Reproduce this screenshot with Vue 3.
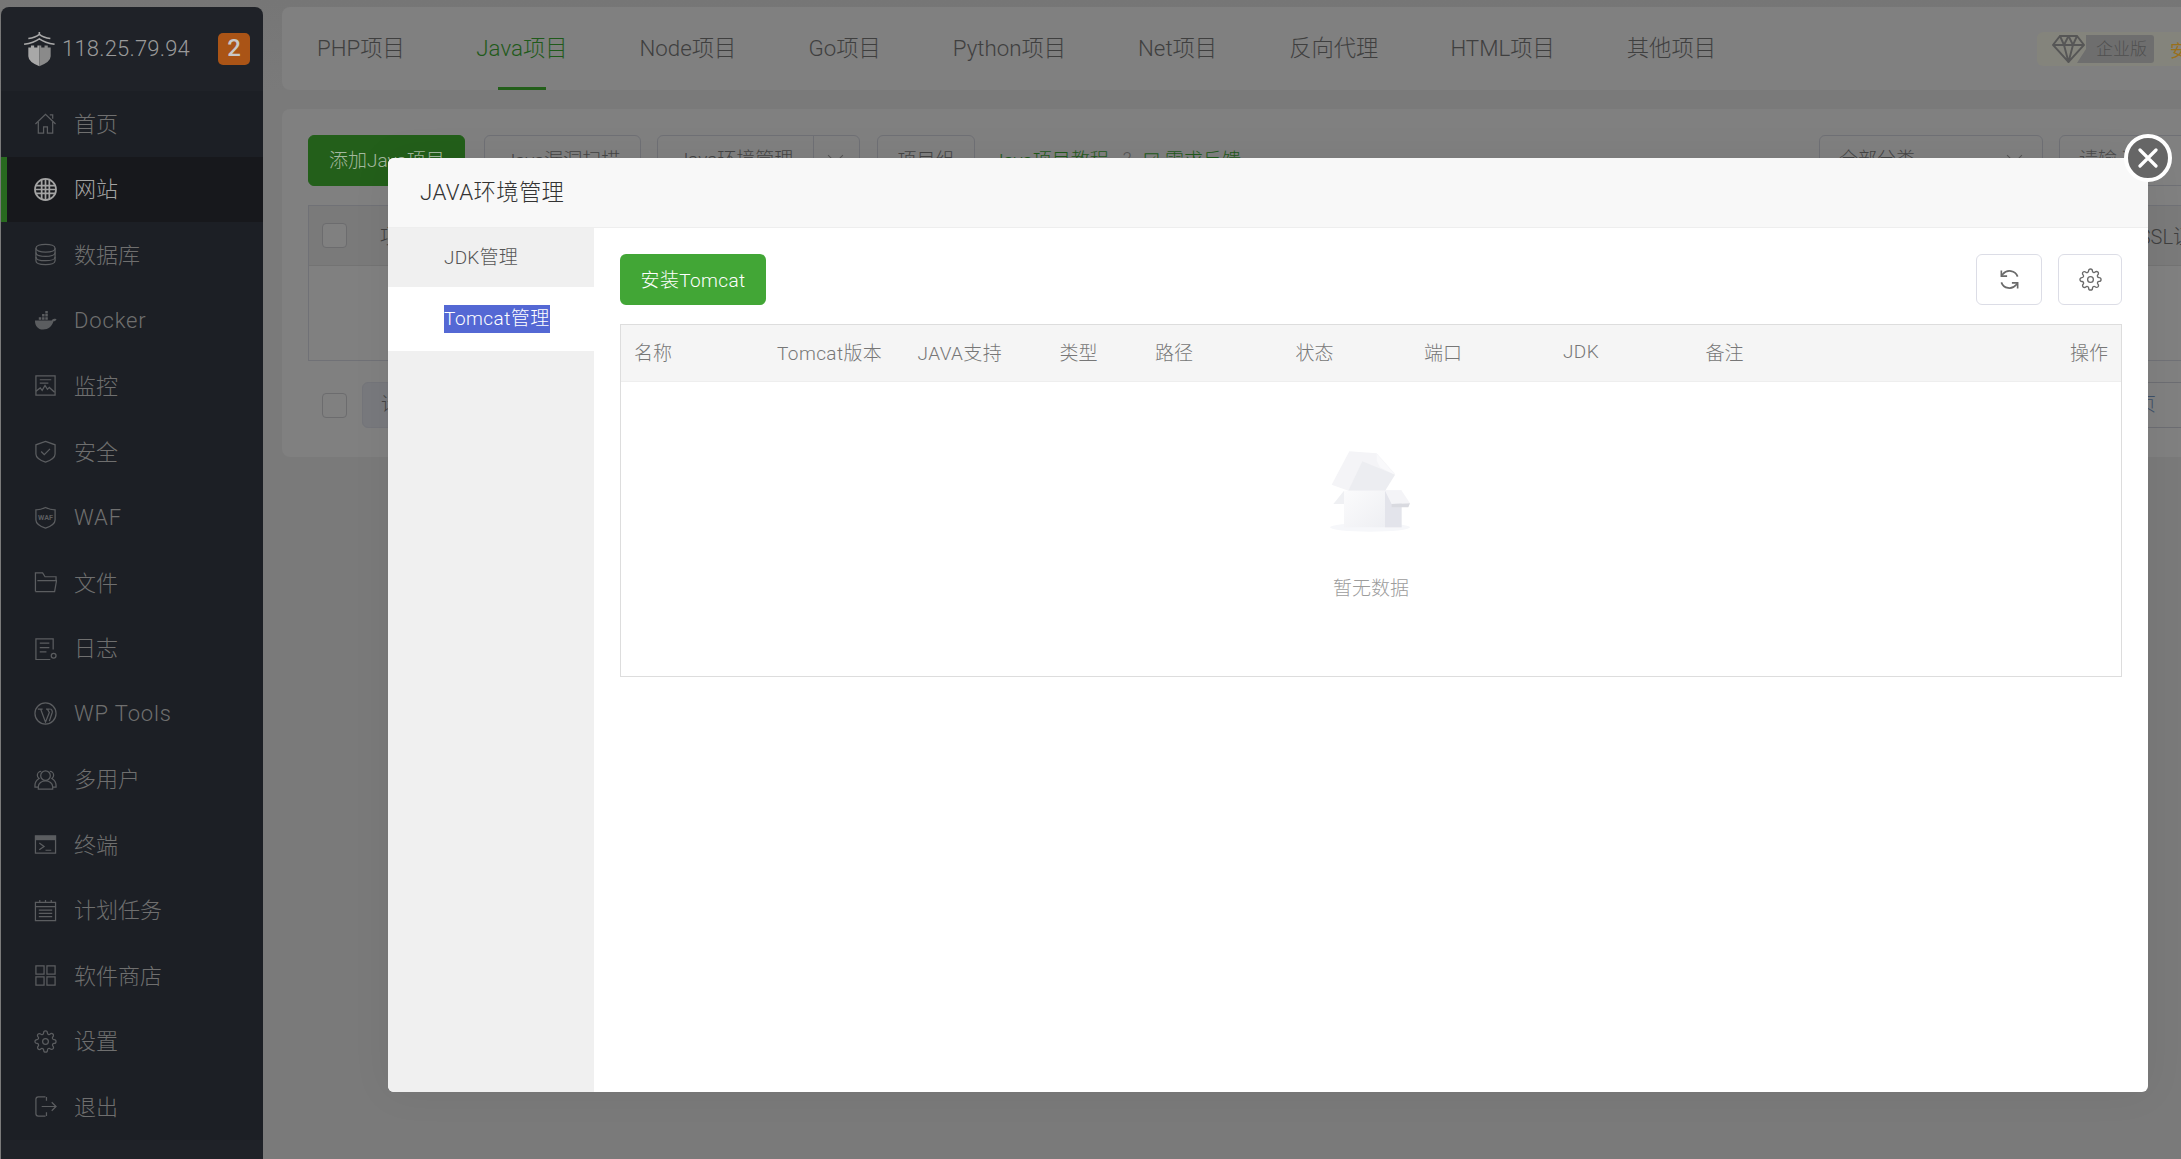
<script setup>
const gearPath = 'M19.4 15a1.65 1.65 0 0 0 .33 1.82l.06.06a2 2 0 0 1 0 2.83 2 2 0 0 1-2.83 0l-.06-.06a1.65 1.65 0 0 0-1.82-.33 1.65 1.65 0 0 0-1 1.51V21a2 2 0 0 1-2 2 2 2 0 0 1-2-2v-.09A1.65 1.65 0 0 0 9 19.4a1.65 1.65 0 0 0-1.82.33l-.06.06a2 2 0 0 1-2.83 0 2 2 0 0 1 0-2.83l.06-.06a1.65 1.65 0 0 0 .33-1.82 1.65 1.65 0 0 0-1.51-1H3a2 2 0 0 1-2-2 2 2 0 0 1 2-2h.09A1.65 1.65 0 0 0 4.6 9a1.65 1.65 0 0 0-.33-1.82l-.06-.06a2 2 0 0 1 0-2.83 2 2 0 0 1 2.83 0l.06.06a1.65 1.65 0 0 0 1.82.33H9a1.65 1.65 0 0 0 1-1.51V3a2 2 0 0 1 2-2 2 2 0 0 1 2 2v.09a1.65 1.65 0 0 0 1 1.51 1.65 1.65 0 0 0 1.82-.33l.06-.06a2 2 0 0 1 2.83 0 2 2 0 0 1 0 2.83l-.06.06a1.65 1.65 0 0 0-.33 1.82V9a1.65 1.65 0 0 0 1.51 1H21a2 2 0 0 1 2 2 2 2 0 0 1-2 2h-.09a1.65 1.65 0 0 0-1.51 1zM15 12a3 3 0 1 1-6 0 3 3 0 0 1 6 0z'

const menu = [
  { label: '首页', paths: ['M1.5 12.5 12 2.5l10.5 10', 'M4.5 10.5V22H10v-6.5h4V22h5.500V10.500', 'M16.500 3h3v4'] },
  { label: '网站', active: true, paths: ['M12 1a11 11 0 1 0 0 22 11 11 0 0 0 0-22z', 'M1.500 8h21M1 12h22M1.500 16h21', 'M8 1.500v21M12 1v22M16 1.500v21'] },
  { label: '数据库', paths: ['M2 5.500C2 3 6.500 1.500 12 1.500S22 3 22 5.500 17.500 9.500 12 9.500 2 8 2 5.500z', 'M2 5.500v13C2 21 6.500 22.500 12 22.500S22 21 22 18.500v-13', 'M2 10c0 2.500 4.500 4 10 4s10-1.500 10-4', 'M2 14.500c0 2.500 4.500 4 10 4s10-1.500 10-4'] },
  { label: 'Docker', latin: true, fills: ['M1 12h17.500c.8-1.500 2-2.300 3.700-1.800l1.300.6c-.6 1.400-1.800 2.100-3.200 2.100C19 18 15 21.500 9.500 21.500 4 21.500 1 17.500 1 12z', 'M5 8.500h2.600v2.600H5zM8.400 8.500H11v2.600H8.400zM11.800 8.500h2.600v2.600h-2.600zM8.400 5.200H11v2.600H8.400zM11.800 5.200h2.600v2.600h-2.600zM11.800 2h2.600v2.600h-2.600z'] },
  { label: '监控', paths: ['M2 2h20v20H2z', 'M6 6h12M6 9.500h9', 'M2 18l4.500-3.500 2 2.500 3-5 2.500 4 2-2 5.500 5'] },
  { label: '安全', paths: ['M12 1.500 22 5v9.500c0 4-5 6.800-10 8.500-5-1.700-10-4.500-10-8.500V5z', 'M7.500 12l3.200 3.200 6-6'] },
  { label: 'WAF', latin: true, badge: 'WAF', paths: ['M12 1.500C15 3 19 4 22 4v10.500c0 4-5 6.800-10 8.500-5-1.700-10-4.500-10-8.500V4c3 0 7-1 10-2.500z'] },
  { label: '文件', paths: ['M1.500 21.500V2H9l2.500 4H23v4', 'M1.500 21.500h20l2-11.500H3.500'] },
  { label: '日志', paths: ['M20 13V2H2v21.500h15', 'M6 6.500h10M6 11h10M6 15.500h7', 'M20.500 17a2.500 2.500 0 1 0 0 5 2.500 2.500 0 0 0 0-5z'] },
  { label: 'WP Tools', latin: true, paths: ['M12 1a11 11 0 1 0 0 22 11 11 0 0 0 0-22z', 'M4 7.500h5M7 7.500l5 13.500 4-10-2-3.500M12.500 7.500h4M16 20l3-9c.6-2-1-3.500-2-3.500'] },
  { label: '多用户', paths: ['M12 3a5 5 0 1 0 0 10 5 5 0 0 0 0-10z', 'M4.500 22v-2.500c0-3.500 3.500-6 7.500-6s7.500 2.500 7.500 6V22z', 'M7.500 3.500C5 3.500 3.500 5.500 3.500 7.500c0 1.500.7 2.700 1.800 3.500C3 12.500 1 15 1 18v2h3.500', 'M16.500 3.500c2.500 0 4 2 4 4 0 1.500-.7 2.700-1.800 3.500C21 12.500 23 15 23 18v2h-3.500'] },
  { label: '终端', paths: ['M1.500 3h21v18h-21z', 'M5.500 10.500l5 3.500-5 3.500M12 18h6'], fills: ['M1 3h22v4.500H1z'] },
  { label: '计划任务', paths: ['M1.500 3.500h21v19h-21z', 'M1.500 8h21M6 1v3M12 1v3M18 1v3', 'M5 11.500h14M5 15h14M5 18.500h14'] },
  { label: '软件商店', paths: ['M2 2h8.500v8.500H2zM13.500 2H22v8.500h-8.500zM2 13.500h8.500V22H2zM13.500 13.500H22V22h-8.500z'] },
  { label: '设置', paths: [gearPath] },
  { label: '退出', paths: ['M12 2H4.500A2.500 2.500 0 0 0 2 4.500v15A2.500 2.500 0 0 0 4.500 22H12', 'M8 12h15M18.500 7.500 23 12l-4.500 4.500', 'M13 2v4M13 18v4'] },
]

const tabs = ['PHP项目', 'Java项目', 'Node项目', 'Go项目', 'Python项目', 'Net项目', '反向代理', 'HTML项目', '其他项目']

const columns = [
  { label: '名称' },
  { label: 'Tomcat版本', latin: true },
  { label: 'JAVA支持', latin: true },
  { label: '类型' },
  { label: '路径' },
  { label: '状态' },
  { label: '端口' },
  { label: 'JDK', latin: true },
  { label: '备注' },
  { label: '操作' },
]
</script>

<template>
  <div class="page">
    <aside class="sidebar">
      <div class="brand">
        <svg class="logo" viewBox="25 30 95 108">
          <path d="M72 30v10M38 50q22-3 34-13 12 10 34 13M25 68q30-5 47-17 17 12 47 17" fill="none" stroke="#a9a9a9" stroke-width="5" />
          <path d="M38 78h8v-6h10v6h10v-6h6v64q-34-14-34-31z" fill="#a8a8a8" />
          <path d="M72 72h6v6h10v-6h10v6h9v27q0 17-35 31z" fill="#8a8a8a" />
        </svg>
        <span class="ip">118.25.79.94</span>
        <span class="count">2</span>
      </div>
      <nav class="menu">
        <div v-for="item in menu" :key="item.label" class="menu-item" :class="{ active: item.active }">
          <svg class="menu-icon" viewBox="0 0 24 24">
            <path v-for="d in item.fills" :key="d" :d="d" fill="currentColor" />
            <path v-for="d in item.paths" :key="d" :d="d" fill="none" stroke="currentColor" :stroke-width="item.active ? 1.800 : 1.300" />
            <text v-if="item.badge" x="12" y="14.500" text-anchor="middle" class="waf-mark">{{ item.badge }}</text>
          </svg>
          <span :class="item.latin ? 'latin-label' : 'cjk-label'">{{ item.label }}</span>
        </div>
      </nav>
      <div class="sidebar-foot"></div>
    </aside>

    <main class="main">
      <header class="tabs">
        <div v-for="tab in tabs" :key="tab" class="tab" :class="{ current: tab === 'Java项目' }">{{ tab }}</div>
        <div class="edition">
          <svg class="diamond" viewBox="0 0 33 28">
            <path d="M8 1h17l7 9-15.500 17L1 10zM1 10h31M12 10l4.500 17L21 10M8 1l4 9 4.500-9 4.500 9 4-9" fill="none" stroke="#565656" stroke-width="1.900" />
          </svg>
          <span class="edition-pill">企业版</span>
          <span class="edition-more">安</span>
        </div>
      </header>

      <section class="panel">
        <div class="toolbar">
          <button class="btn primary b-add">添加Java项目</button>
          <button class="btn b-scan">Java漏洞扫描</button>
          <div class="btn split b-env"><span class="split-main">Java环境管理</span><span class="split-arrow"></span></div>
          <button class="btn b-group">项目组</button>
          <span class="link">Java项目教程</span>
          <span class="help">?</span>
          <span class="link feedback">☑ 需求反馈</span>
          <div class="toolbar-right">
            <div class="btn select">全部分类<span class="chevron"></span></div>
            <div class="btn search">请输入</div>
          </div>
        </div>
        <div class="back-table">
          <div class="back-head">
            <span class="check"></span>
            <span class="back-name">项目名称</span>
            <span class="back-ssl">SSL证书</span>
          </div>
        </div>
        <div class="back-foot">
          <span class="check"></span>
          <div class="batch">请选择批量操作</div>
          <div class="pager">页</div>
        </div>
      </section>
    </main>

    <div class="dialog">
      <button class="close" aria-label="关闭">
        <svg viewBox="0 0 20 20"><path d="M2 2l16 16M18 2 2 18" stroke="#fff" stroke-width="3.200" stroke-linecap="round" /></svg>
      </button>
      <div class="dialog-title">JAVA环境管理</div>
      <div class="dialog-body">
        <aside class="side-nav">
          <div class="side-item">JDK管理</div>
          <div class="side-item selected"><span class="picked">Tomcat管理</span></div>
        </aside>
        <div class="content">
          <div class="content-bar">
            <button class="install">安装Tomcat</button>
            <div class="tools">
              <button class="icon-btn refresh">
                <svg viewBox="0 0 24 24" fill="none" stroke="#6a6a6a" stroke-width="1.800">
                  <path d="M20.500 9A9 9 0 0 0 5 6.500L3.500 8" />
                  <path d="M3.500 15a9 9 0 0 0 15.500 2.500l1.500-1.500" />
                  <path d="M3.500 2.500v6h6M20.500 21.500v-6h-6" stroke-width="1.700" />
                </svg>
              </button>
              <button class="icon-btn gear">
                <svg viewBox="0 0 24 24" fill="none" stroke="#6a6a6a" stroke-width="1.400"><path :d="gearPath" /></svg>
              </button>
            </div>
          </div>
          <div class="table">
            <div class="table-head">
              <span v-for="col in columns" :key="col.label" class="cell" :class="{ wide: col.latin }"><span class="cell-text">{{ col.label }}</span></span>
            </div>
            <div class="empty">
              <svg class="box" viewBox="0 0 300 285">
                <defs>
                  <linearGradient id="boxFront" x1="0" y1="0" x2="1" y2="1">
                    <stop offset="0" stop-color="#fbfbfc" />
                    <stop offset="1" stop-color="#eeeff3" />
                  </linearGradient>
                </defs>
                <ellipse cx="150" cy="250" rx="120" ry="13" fill="#f6f7fa" />
                <path d="M35 122 88 22l82 6 55 62-30 50H85z" fill="#f4f4f7" />
                <path d="M85 140 127 52l98 40-30 48z" fill="#ecedf1" />
                <path d="M170 30l55 62-45-22-10-20z" fill="#f9f9fb" />
                <path d="M40 180 72 140v40z" fill="#eff0f3" />
                <path d="M72 140h123v110H72z" fill="url(#boxFront)" />
                <path d="M195 140h50v110h-50z" fill="#e3e4eb" />
                <path d="M195 140h50l25 38-55 2z" fill="#f4f4f7" />
                <path d="M215 180l55-2-5 12h-50z" fill="#d9dae0" />
              </svg>
              <div class="empty-text">暂无数据</div>
            </div>
          </div>
        </div>
      </div>
    </div>
  </div>
</template>

<style>
html, body { margin: 0; background: #7a7a7a; overflow: hidden; }
</style>

<style scoped>
.page {
  height: 1159px;
  box-sizing: border-box;
  padding: 7px 0 0 1px;
  display: flex;
  overflow: hidden;
  position: relative;
  background: linear-gradient(#767676, #7a7a7a 90px);
  font-family: Roboto, "Noto Sans CJK SC", sans-serif;
  font-weight: 300;
}
button { font-family: inherit; font-weight: inherit; padding: 0; }

/* sidebar */
.sidebar {
  width: 262px;
  flex: none;
  background: #1f2228;
  border-radius: 8px 8px 0 0;
  display: flex;
  flex-direction: column;
  color: #6f6f6f;
}
.brand { height: 84px; display: flex; align-items: center; padding: 0 13px 0 23px; box-sizing: border-box; }
.logo { width: 31px; height: 35px; margin-right: 7px; }
.ip { font-size: 22px; letter-spacing: .2px; color: #9a9a9a; padding-bottom: 1px; }
.count {
  margin-left: auto;
  width: 32px;
  height: 32px;
  border-radius: 5px;
  background: #aa5416;
  color: #c8c8c8;
  font-size: 24px;
  font-weight: 500;
  line-height: 31px;
  text-align: center;
}
.menu { background: #1c1f25; }
.menu-item {
  height: 65.550px;
  display: flex;
  align-items: center;
  gap: 17px;
  padding-left: 33px;
  font-size: 22px;
  box-sizing: border-box;
}
.menu-item.active { background: #17181c; border-left: 6px solid #286a1f; padding-left: 27px; color: #a3a3a3; }
.menu-icon { width: 23px; height: 23px; flex: none; color: #5b5d60; }
.active .menu-icon { color: #a3a3a3; }
.waf-mark { font-size: 7.500px; font-weight: 700; fill: currentColor; }
.cjk-label { padding-bottom: 4px; }
.latin-label { letter-spacing: .85px; }
.sidebar-foot { flex: 1; background: #1f2228; }

/* main */
.main { flex: 1; min-width: 0; margin-left: 19px; display: flex; flex-direction: column; gap: 19px; overflow: hidden; }
.tabs {
  height: 83px;
  flex: none;
  background: #808080;
  border-radius: 8px 0 0 8px;
  display: flex;
  align-items: stretch;
  overflow: hidden;
  font-size: 22.300px;
  color: #3f3f3f;
  padding-left: 0;
}
.tab { padding: 0 36px; line-height: 82px; position: relative; white-space: nowrap; }
.tab:first-child { padding-left: 35px; padding-right: 35.500px; }
.tab.current { color: #1f5a1a; }
.tab.current::after {
  content: '';
  position: absolute;
  left: 58px;
  bottom: 0;
  width: 48px;
  height: 3px;
  background: #235f1a;
}
.edition {
  margin: 25px 0 0 auto;
  width: 144px;
  height: 34px;
  flex: none;
  background: #84847c;
  border-radius: 6px 0 0 6px;
  display: flex;
  align-items: center;
  padding-left: 15px;
  box-sizing: border-box;
  white-space: nowrap;
}
.diamond { width: 33px; height: 28px; flex: none; position: relative; z-index: 1; }
.edition-pill {
  margin-left: -8px;
  width: 77px;
  height: 28px;
  flex: none;
  box-sizing: border-box;
  background: #6e6e6e;
  border-radius: 0 3px 3px 0;
  clip-path: polygon(9px 0, 100% 0, 100% 100%, 0 100%, 9px 50%);
  padding-left: 19px;
  font-size: 17px;
  line-height: 28px;
  color: #505050;
}
.edition-more { margin-left: 16px; font-size: 17px; color: #9a6f1a; font-weight: 400; }

/* background panel */
.panel { height: 348px; flex: none; background: #808080; border-radius: 8px 0 0 8px; padding: 26px 0 0 26px; box-sizing: border-box; overflow: hidden; }
.toolbar { display: flex; align-items: center; width: 1901px; height: 51px; font-size: 19px; white-space: nowrap; }
.btn {
  height: 51px;
  box-sizing: border-box;
  border: 1px solid #6f7075;
  border-radius: 6px;
  background: #808080;
  color: #444;
  font-size: 19px;
  text-align: center;
  line-height: 47px;
  flex: none;
}
.primary { background: #235f1a; border-color: #235f1a; color: #a3b89f; text-align: left; padding-left: 20px; }
.b-add { width: 157px; margin-right: 19px; }
.b-scan { width: 157px; margin-right: 16px; }
.b-env { width: 203px; margin-right: 17px; display: flex; }
.split-main { width: 155px; border-right: 1px solid #6f7075; }
.split-arrow { flex: 1; position: relative; }
.split-arrow::after { content: ''; position: absolute; left: 16px; top: 14px; width: 10px; height: 10px; border: solid #555; border-width: 0 1px 1px 0; transform: rotate(45deg); }
.b-group { width: 98px; margin-right: 18px; }
.link { color: #1f5a1a; padding-bottom: 4px; }
.help { margin: 0 12px 0 14px; color: #555; padding-bottom: 4px; }
.toolbar-right { margin-left: auto; display: flex; gap: 16px; }
.select { width: 224px; text-align: left; padding-left: 19px; position: relative; }
.chevron { position: absolute; right: 22px; top: 14px; width: 10px; height: 10px; border: solid #555; border-width: 0 1px 1px 0; transform: rotate(45deg); }
.search { width: 150px; text-align: left; padding-left: 19px; color: #4c4c4c; }
.back-table { margin: 19px 0 0; width: 1905px; height: 156px; box-sizing: border-box; border: 1px solid #707176; border-right: 0; }
.back-head { height: 59px; background: #7a7a7a; border-bottom: 1px solid #737373; display: flex; align-items: center; font-size: 20px; color: #3f3f3f; padding-left: 13px; }
.check { width: 25px; height: 25px; box-sizing: border-box; border: 1px solid #6c6c6e; border-radius: 4px; background: #808080; flex: none; }
.back-name { margin-left: 33px; }
.back-ssl { margin-left: auto; }
.back-foot { margin-top: 21px; height: 46px; display: flex; align-items: center; padding-left: 14px; font-size: 19px; color: #444; }
.batch { margin-left: 15px; width: 300px; height: 46px; box-sizing: border-box; border: 1px solid #74757a; border-radius: 6px; background: #78797d; line-height: 44px; padding-left: 18px; flex: none; }
.pager { margin-left: auto; width: 300px; height: 46px; box-sizing: border-box; border: solid #6c6d72; border-width: 1px 0; text-align: right; padding-right: 25px; line-height: 44px; color: #3e5068; }

/* dialog */
.dialog {
  position: absolute;
  left: 388px;
  top: 158px;
  width: 1760px;
  height: 934px;
  background: #fff;
  border-radius: 6px;
  box-shadow: 0 0 40px rgba(0, 0, 0, .06);
  display: flex;
  flex-direction: column;
}
.close {
  position: absolute;
  top: -24px;
  right: -24px;
  width: 48px;
  height: 48px;
  border: 4px solid #fff;
  border-radius: 50%;
  background: #666;
  display: flex;
  align-items: center;
  justify-content: center;
  box-sizing: border-box;
}
.close svg { width: 20px; height: 20px; }
.dialog-title {
  height: 70px;
  flex: none;
  box-sizing: border-box;
  background: #f8f8f8;
  border-bottom: 1px solid #eee;
  border-radius: 6px 6px 0 0;
  padding-left: 32px;
  font-size: 22.300px;
  letter-spacing: .4px;
  line-height: 69px;
  color: #333;
}
.dialog-body { flex: 1; display: flex; min-height: 0; }
.side-nav { width: 206px; flex: none; background: #f0f0f0; border-radius: 0 0 0 6px; }
.side-item { height: 59px; line-height: 59px; padding-left: 56px; font-size: 19px; letter-spacing: .2px; color: #555; }
.side-item.selected { height: 64px; line-height: 62px; background: #fff; }
.picked { display: inline-block; background: #5468d4; color: #fff; line-height: 28px; vertical-align: middle; letter-spacing: .45px; }
.content { flex: 1; padding: 26px; min-width: 0; }
.content-bar { height: 51px; display: flex; justify-content: space-between; margin-bottom: 19px; }
.install { width: 146px; height: 51px; border: 0; border-radius: 6px; background: #42a636; color: #fff; font-size: 19px; letter-spacing: .35px; padding-bottom: 2px; }
.tools { display: flex; gap: 16px; }
.icon-btn { height: 51px; box-sizing: border-box; border: 1px solid #dcdde6; border-radius: 6px; background: #fff; display: flex; align-items: center; justify-content: center; }
.refresh { width: 66px; }
.gear { width: 64px; }
.icon-btn svg { width: 23px; height: 23px; }
.table { height: 353px; box-sizing: border-box; border: 1px solid #ddd; }
.table-head {
  height: 57px;
  box-sizing: border-box;
  background: #f5f5f5;
  border-bottom: 1px solid #eee;
  display: grid;
  grid-template-columns: 143px 140.500px 142px 95.500px 140.500px 128.500px 139px 142.500px 1fr 120px;
  align-items: center;
  font-size: 19px;
  color: #777;
  white-space: nowrap;
}
.cell { padding: 0 0 4px 13px; }
.cell.wide { letter-spacing: .4px; }
.cell:last-child { text-align: right; padding: 0 13px 4px 0; }
.empty { display: flex; flex-direction: column; align-items: center; padding-top: 62px; }
.box { width: 100px; height: 95px; margin-right: 2px; }
.empty-text { margin-top: 36px; font-size: 19px; line-height: 28px; color: #9c9c9c; }
</style>
